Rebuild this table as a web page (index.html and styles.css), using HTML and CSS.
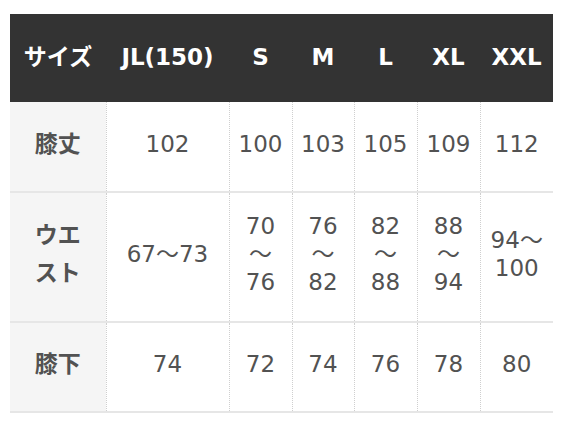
FILE: index.html
```html
<!DOCTYPE html>
<html lang="ja">
<head>
<meta charset="utf-8">
<title>サイズ表</title>
<link rel="stylesheet" href="styles.css">
</head>
<body>
<table class="size-table">
  <colgroup>
    <col class="c-label">
    <col class="c-jl">
    <col class="c-s">
    <col class="c-m">
    <col class="c-l">
    <col class="c-xl">
    <col class="c-xxl">
  </colgroup>
  <thead>
    <tr class="head-row">
      <th>サイズ</th>
      <th>JL(150)</th>
      <th>S</th>
      <th>M</th>
      <th>L</th>
      <th>XL</th>
      <th>XXL</th>
    </tr>
  </thead>
  <tbody>
    <tr class="row-short">
      <th>膝丈</th>
      <td>102</td>
      <td>100</td>
      <td>103</td>
      <td>105</td>
      <td>109</td>
      <td>112</td>
    </tr>
    <tr class="row-tall">
      <th>ウエ<br>スト</th>
      <td>67～73</td>
      <td>70<br>～<br>76</td>
      <td>76<br>～<br>82</td>
      <td>82<br>～<br>88</td>
      <td>88<br>～<br>94</td>
      <td>94～<br>100</td>
    </tr>
    <tr class="row-short row-last">
      <th>膝下</th>
      <td>74</td>
      <td>72</td>
      <td>74</td>
      <td>76</td>
      <td>78</td>
      <td>80</td>
    </tr>
  </tbody>
</table>
</body>
</html>
```

FILE: styles.css
```css
html, body {
  margin: 0;
  padding: 0;
  background: #ffffff;
}

body {
  font-family: "DejaVu Sans", "Noto Sans CJK JP", sans-serif;
  font-size: 23px;
  color: #525252;
}

.size-table {
  margin: 14px 0 0 10px;
  width: 543px;
  border-collapse: collapse;
  table-layout: fixed;
}

.c-label { width: 96px; }
.c-jl { width: 123px; }
.c-s { width: 63px; }
.c-m { width: 62px; }
.c-l { width: 63px; }
.c-xl { width: 63px; }
.c-xxl { width: 73px; }

.size-table th,
.size-table td {
  padding: 0 6px 6px;
  text-align: center;
  vertical-align: middle;
}

.head-row {
  height: 88px;
  background: #333333;
}

.head-row th {
  color: #ffffff;
  font-weight: bold;
  line-height: 28px;
  padding: 0 0 2px;
}

tbody th {
  background: #f5f5f5;
  font-weight: bold;
  color: #525252;
  line-height: 38px;
}

tbody td {
  line-height: 28px;
  border-left: 1px dotted #cfcfcf;
}

tbody th,
tbody td {
  border-bottom: 2px solid #e6e6e6;
}

.row-short {
  height: 90px;
}

.row-tall {
  height: 130px;
}
```
